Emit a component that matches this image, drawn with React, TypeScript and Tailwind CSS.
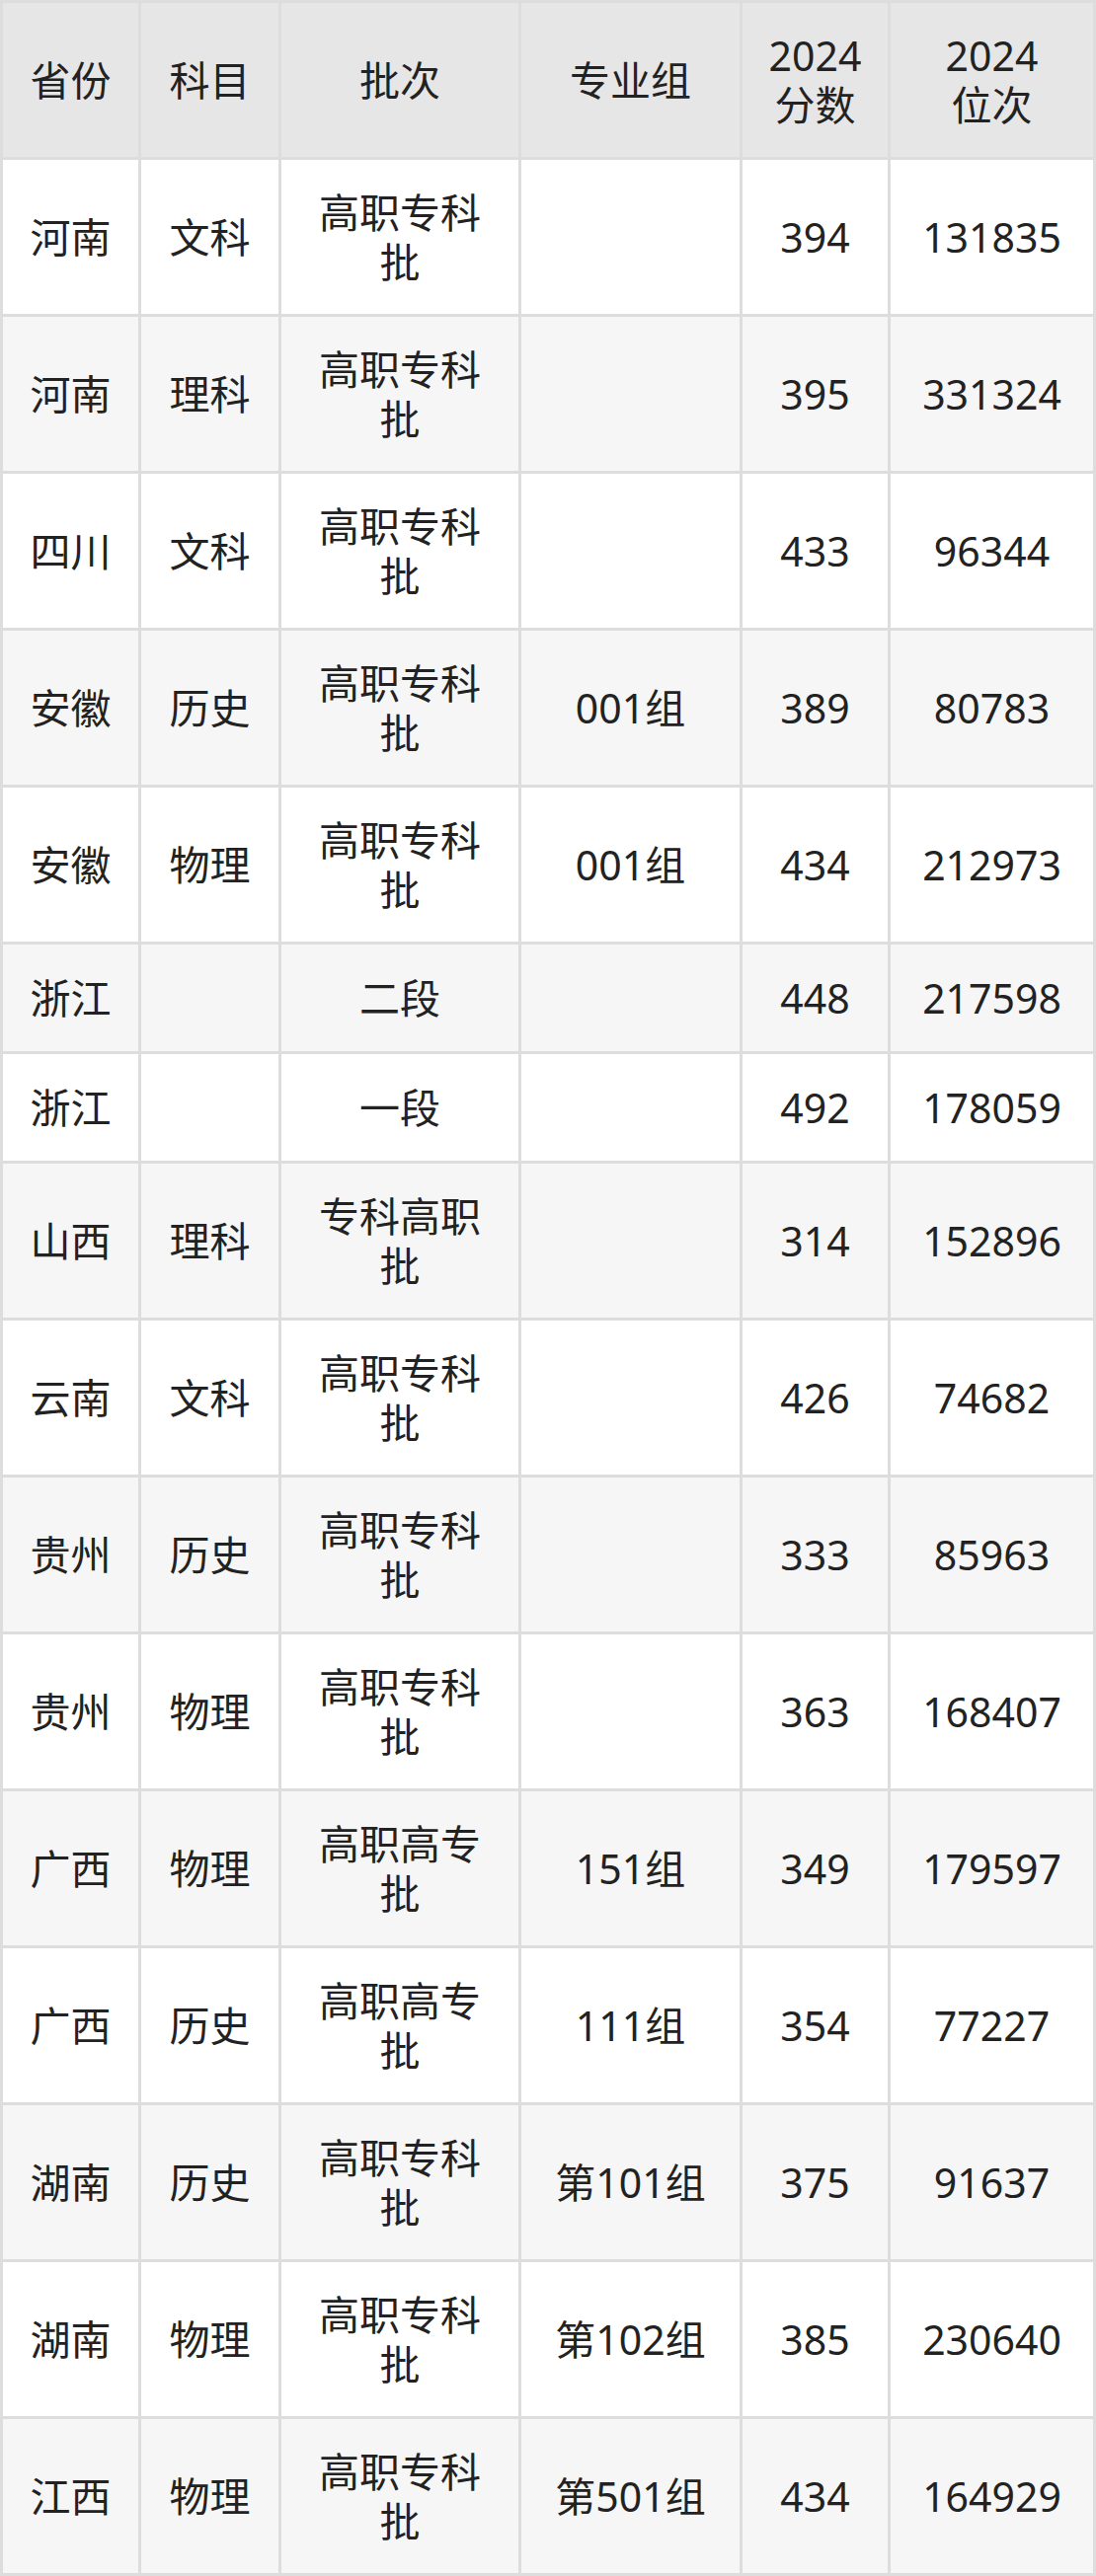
import React from "react";

type Row = [string, string, string, string, string, string, boolean?];

const rows: Row[] = [
  ["河南", "文科", "高职专科批", "", "394", "131835"],
  ["河南", "理科", "高职专科批", "", "395", "331324"],
  ["四川", "文科", "高职专科批", "", "433", "96344"],
  ["安徽", "历史", "高职专科批", "001组", "389", "80783"],
  ["安徽", "物理", "高职专科批", "001组", "434", "212973"],
  ["浙江", "", "二段", "", "448", "217598", true],
  ["浙江", "", "一段", "", "492", "178059", true],
  ["山西", "理科", "专科高职批", "", "314", "152896"],
  ["云南", "文科", "高职专科批", "", "426", "74682"],
  ["贵州", "历史", "高职专科批", "", "333", "85963"],
  ["贵州", "物理", "高职专科批", "", "363", "168407"],
  ["广西", "物理", "高职高专批", "151组", "349", "179597"],
  ["广西", "历史", "高职高专批", "111组", "354", "77227"],
  ["湖南", "历史", "高职专科批", "第101组", "375", "91637"],
  ["湖南", "物理", "高职专科批", "第102组", "385", "230640"],
  ["江西", "物理", "高职专科批", "第501组", "434", "164929"],
];

const headers: React.ReactNode[] = [
  "省份",
  "科目",
  "批次",
  "专业组",
  <>
    <div>2024</div>
    <div>分数</div>
  </>,
  <>
    <div>2024</div>
    <div>位次</div>
  </>,
];

export default function App() {
  return (
    <div
      className="w-[1110px] bg-white text-[#222222]"
      style={{ fontFamily: '"Noto Sans", "Noto Sans CJK SC", sans-serif' }}
    >
      <div className="grid grid-cols-[137px_139px_240px_221px_147px_205px] gap-[3px] p-[3px] bg-[#dddddd]">
        {headers.map((h, i) => (
          <div
            key={"h" + i}
            className="h-[156px] bg-[#e6e6e6] flex items-center justify-center text-center px-[20px] text-[41px] leading-[50px]"
          >
            <div className="flex flex-col items-center">{h}</div>
          </div>
        ))}
        {rows.map((r, ri) => {
          const bg = ri % 2 === 1 ? "bg-[#f6f6f6]" : "bg-white";
          const h = r[6] ? "h-[108px]" : "h-[156px]";
          return r.slice(0, 6).map((c, ci) => (
            <div
              key={ri + "-" + ci}
              className={`${bg} ${h} flex items-center justify-center text-center px-[20px] text-[41px] leading-[50px]`}
            >
              {c as string}
            </div>
          ));
        })}
      </div>
    </div>
  );
}
